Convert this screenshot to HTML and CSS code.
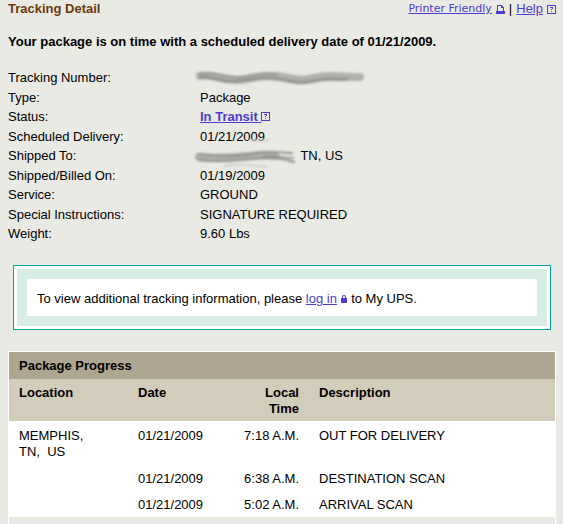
FILE: index.html
```
<!DOCTYPE html>
<html lang="en">
<head>
    <meta charset="UTF-8">
    <meta name="viewport" content="width=device-width, initial-scale=1.0">
    <title>Tracking Detail</title>
    <link rel="stylesheet" href="styles.css">
</head>
<body>
    <div class="header">
        <h1>Tracking Detail</h1>
        <div class="tools">
            <a href="#print" class="print-link">Printer Friendly</a>
            <svg class="icon" width="9" height="9" viewBox="0 0 9 9" shape-rendering="crispEdges" aria-hidden="true">
                <path d="M1 0h5v1h1v1h1v4h1v3H0V6h1zM2 1v5h5V3H5V1z" fill-rule="evenodd"/>
            </svg>
            <span class="divider">|</span>
            <a href="#help">Help</a>
            <svg class="icon help-icon" width="9" height="9" viewBox="0 0 9 9" shape-rendering="crispEdges" aria-hidden="true">
                <path d="M0 0h9v9H0zM1 1v7h7V1z" fill-rule="evenodd"/>
                <path d="M3 2h3v2H5v1H4V4h1V3H3zM4 6h1v1H4z"/>
            </svg>
        </div>
    </div>

    <p class="summary">Your package is on time with a scheduled delivery date of 01/21/2009.</p>

    <table class="details">
        <tr>
            <th scope="row">Tracking Number:</th>
            <td>
                <svg class="smudge number-smudge" width="176" height="16" viewBox="0 0 176 16" role="img" aria-label="Hidden">
                    <g fill="none" stroke-linecap="round">
                        <path d="M6 6c14-3 20 5 38 4s20-6 38-4 22 6 38 2 28-1 46-1" stroke="#b0b1ad" stroke-width="8"/>
                        <path d="M6 7c14-1 20 6 38 4s20-4 38-2 22 6 38 2 24 0 33-2" stroke="#949592" stroke-width="3"/>
                        <path d="M5 4c16-3 24 3 38 3s24-5 40-2" stroke="#969794" stroke-width="2"/>
                    </g>
                </svg>
            </td>
        </tr>
        <tr>
            <th scope="row">Type:</th>
            <td>Package</td>
        </tr>
        <tr>
            <th scope="row">Status:</th>
            <td>
                <a href="#status" class="status">In Transit&nbsp;</a>
                <svg class="icon status-icon" width="9" height="9" viewBox="0 0 9 9" shape-rendering="crispEdges" aria-hidden="true">
                    <path d="M0 0h9v9H0zM1 1v7h7V1z" fill-rule="evenodd"/>
                    <path d="M3 2h3v2H5v1H4V4h1V3H3zM4 6h1v1H4z"/>
                </svg>
            </td>
        </tr>
        <tr>
            <th scope="row">Scheduled Delivery:</th>
            <td>01/21/2009</td>
        </tr>
        <tr>
            <th scope="row">Shipped To:</th>
            <td>
                <svg class="smudge city-smudge" width="103" height="16" viewBox="0 0 103 16" role="img" aria-label="Hidden">
                    <g fill="none" stroke-linecap="round">
                        <path d="M5 8c20 2 36 0 50-1s14-2 26 0" stroke="#b0b1ad" stroke-width="8"/>
                        <path d="M5 5c20 2 36 3 52 0s24-2 41-1" stroke="#90918e" stroke-width="2"/>
                        <path d="M4 11c24 3 40 0 54-1s24-3 42 3" stroke="#90918e" stroke-width="2"/>
                        <path d="M70 7c12-1 18 2 29 2" stroke="#999a96" stroke-width="2"/>
                        <path d="M56-9c6 1 12 1 18 0M30 17c14-2 28-1 42 1" stroke="#cfd0ca" stroke-width="2"/>
                    </g>
                </svg>
                <span>TN, US</span>
            </td>
        </tr>
        <tr>
            <th scope="row">Shipped/Billed On:</th>
            <td>01/19/2009</td>
        </tr>
        <tr>
            <th scope="row">Service:</th>
            <td>GROUND</td>
        </tr>
        <tr>
            <th scope="row">Special Instructions:</th>
            <td>SIGNATURE REQUIRED</td>
        </tr>
        <tr>
            <th scope="row">Weight:</th>
            <td>9.60 Lbs</td>
        </tr>
    </table>

    <div class="notice">
        <p>
            To view additional tracking information, please <a href="#login">log in</a>
            <svg class="icon lock-icon" width="6" height="8" viewBox="0 0 6 8" aria-hidden="true">
                <path d="M0 3h1V2a2 2 0 0 1 4 0v1h1v5H0zM2 3h2V2a1 1 0 0 0-2 0z" fill-rule="evenodd"/>
            </svg>
            to My UPS.
        </p>
    </div>

    <div class="progress">
        <h2>Package Progress</h2>
        <table>
            <thead>
                <tr>
                    <th scope="col" class="location">Location</th>
                    <th scope="col" class="date">Date</th>
                    <th scope="col" class="time">Local<br>Time</th>
                    <th scope="col">Description</th>
                </tr>
            </thead>
            <tbody>
                <tr class="stop">
                    <td>MEMPHIS,<br>TN,&nbsp; US</td>
                    <td>01/21/2009</td>
                    <td class="time">7:18 A.M.</td>
                    <td>OUT FOR DELIVERY</td>
                </tr>
                <tr>
                    <td></td>
                    <td>01/21/2009</td>
                    <td class="time">6:38 A.M.</td>
                    <td>DESTINATION SCAN</td>
                </tr>
                <tr>
                    <td></td>
                    <td>01/21/2009</td>
                    <td class="time">5:02 A.M.</td>
                    <td>ARRIVAL SCAN</td>
                </tr>
            </tbody>
        </table>
        <div class="progress-end"></div>
    </div>
</body>
</html>
```

FILE: styles.css
```
* {
    margin: 0;
    padding: 0;
    box-sizing: border-box;
}

body {
    padding: 1px 7px 0 8px;
    background: #e9eae4;
    color: #000;
    font-family: "Liberation Sans", Arial, Helvetica, sans-serif;
    font-size: 13px;
    line-height: 16px;
}

a {
    color: #4f3bcf;
}

.icon {
    fill: #4f3bcf;
}

.header {
    display: flex;
    justify-content: space-between;
}

h1 {
    color: #6b3a08;
    font-size: 13px;
    line-height: 16px;
}

.tools {
    display: flex;
    align-items: center;
    gap: 4px;
}

.print-link {
    font-family: "DejaVu Sans", Verdana, sans-serif;
    font-size: 11px;
}

.summary {
    margin-top: 17px;
    font-weight: bold;
}

table {
    width: 100%;
    border-collapse: collapse;
}

/* nine rows share this height */
.details {
    height: 176px;
    margin-top: 18px;
}

.details th {
    width: 192px;
    font-weight: normal;
    text-align: left;
}

.details td {
    white-space: nowrap;
}

.status {
    font-weight: bold;
}

.status-icon {
    margin-left: -4px;
}

.smudge {
    margin-left: -6px;
    vertical-align: middle;
    overflow: visible;
    filter: blur(1px);
}

.lock-icon {
    margin-right: 1px;
}

.notice {
    margin: 21px 5px 0;
    padding: 3px;
    border: 1px solid #00a5a5;
    background: #fff;
}

.notice p {
    padding: 11px 10px 9px;
    border: 10px solid #d8ede3;
    line-height: 17px;
}

.progress {
    margin-top: 21px;
    border: 1px solid #fff;
    border-bottom: 0;
}

.progress h2 {
    padding: 6px 10px 5px;
    background: #aea691;
    font-size: 13px;
    line-height: 16px;
}

.progress th,
.progress td {
    padding: 6px 10px 4px;
    text-align: left;
    vertical-align: top;
}

.progress th {
    background: #d2ccbb;
}

.progress td {
    background: #fff;
}

.progress .stop td {
    padding: 7px 10px 5px;
}

.progress .location {
    width: 119px;
}

.progress .date {
    width: 91px;
}

.progress th.time {
    width: 90px;
}

.progress .time {
    text-align: right;
}

.progress-end {
    height: 7px;
}
```
